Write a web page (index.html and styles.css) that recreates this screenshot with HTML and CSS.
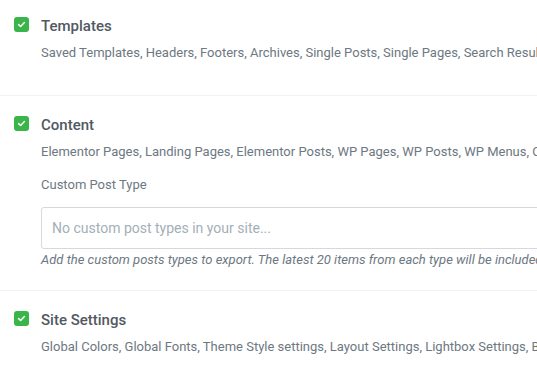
FILE: index.html
```html
<!DOCTYPE html>
<html lang="en">
<head>
<meta charset="utf-8">
<title>Export kit</title>
<link rel="stylesheet" href="styles.css">
</head>
<body>
<div class="kit">
  <section class="item item-first">
    <div class="item-head">
      <span class="check"><svg viewBox="0 0 15 15" width="15" height="15"><path d="M4.6 7.6 L6.6 9.5 L10.4 5.6" fill="none" stroke="#fff" stroke-width="1.5" stroke-linecap="round" stroke-linejoin="round"/></svg></span>
      <h3 class="item-title">Templates</h3>
    </div>
    <p class="item-desc">Saved Templates, Headers, Footers, Archives, Single Posts, Single Pages, Search Results, 404 Error Page, Popups, Global widgets</p>
  </section>
  <section class="item item-content">
    <div class="item-head">
      <span class="check"><svg viewBox="0 0 15 15" width="15" height="15"><path d="M4.6 7.6 L6.6 9.5 L10.4 5.6" fill="none" stroke="#fff" stroke-width="1.5" stroke-linecap="round" stroke-linejoin="round"/></svg></span>
      <h3 class="item-title">Content</h3>
    </div>
    <p class="item-desc">Elementor Pages, Landing Pages, Elementor Posts, WP Pages, WP Posts, WP Menus, Custom Post Types</p>
    <p class="field-label">Custom Post Type</p>
    <div class="select">No custom post types in your site...</div>
    <p class="field-help">Add the custom posts types to export. The latest 20 items from each type will be included.</p>
  </section>
  <section class="item">
    <div class="item-head">
      <span class="check"><svg viewBox="0 0 15 15" width="15" height="15"><path d="M4.6 7.6 L6.6 9.5 L10.4 5.6" fill="none" stroke="#fff" stroke-width="1.5" stroke-linecap="round" stroke-linejoin="round"/></svg></span>
      <h3 class="item-title">Site Settings</h3>
    </div>
    <p class="item-desc">Global Colors, Global Fonts, Theme Style settings, Layout Settings, Lightbox Settings, Background Settings</p>
  </section>
</div>
</body>
</html>
```

FILE: styles.css
```css
html, body {
  margin: 0;
  padding: 0;
  overflow: hidden;
  background: #fff;
}
body {
  font-family: Roboto, "Liberation Sans", Arial, sans-serif;
  color: #6d7882;
}
.kit {
  width: 760px;
}
.item {
  border-top: 1px solid #f1f2f3;
  padding: 20px 0 0 14px;
}
.item-first {
  border-top: 0;
  padding-top: 17px;
  padding-bottom: 32px;
}
.item-content {
  padding-bottom: 20px;
}
.item-head {
  display: flex;
  align-items: center;
  gap: 12px;
  height: 15px;
}
.check {
  width: 15px;
  height: 15px;
  border-radius: 3px;
  background: #39b54a;
  display: flex;
  flex: none;
}
.item-title {
  margin: 0;
  font-size: 15px;
  line-height: 15px;
  font-weight: 500;
  color: #515962;
  position: relative;
  top: 2px;
}
.item-desc, .field-label, .field-help {
  margin: 0;
  padding-left: 27px;
  font-size: 13px;
  line-height: 20px;
  white-space: nowrap;
}
.item-desc {
  margin-top: 11px;
}
.field-label {
  margin-top: 13px;
}
.select {
  margin: 12px 0 0 27px;
  height: 40px;
  border: 1px solid #d5d8dc;
  border-radius: 3px;
  padding-left: 10px;
  display: flex;
  align-items: center;
  font-size: 14px;
  color: #a4afb7;
  white-space: nowrap;
}
.field-help {
  margin-top: 1px;
  font-style: italic;
}
```
